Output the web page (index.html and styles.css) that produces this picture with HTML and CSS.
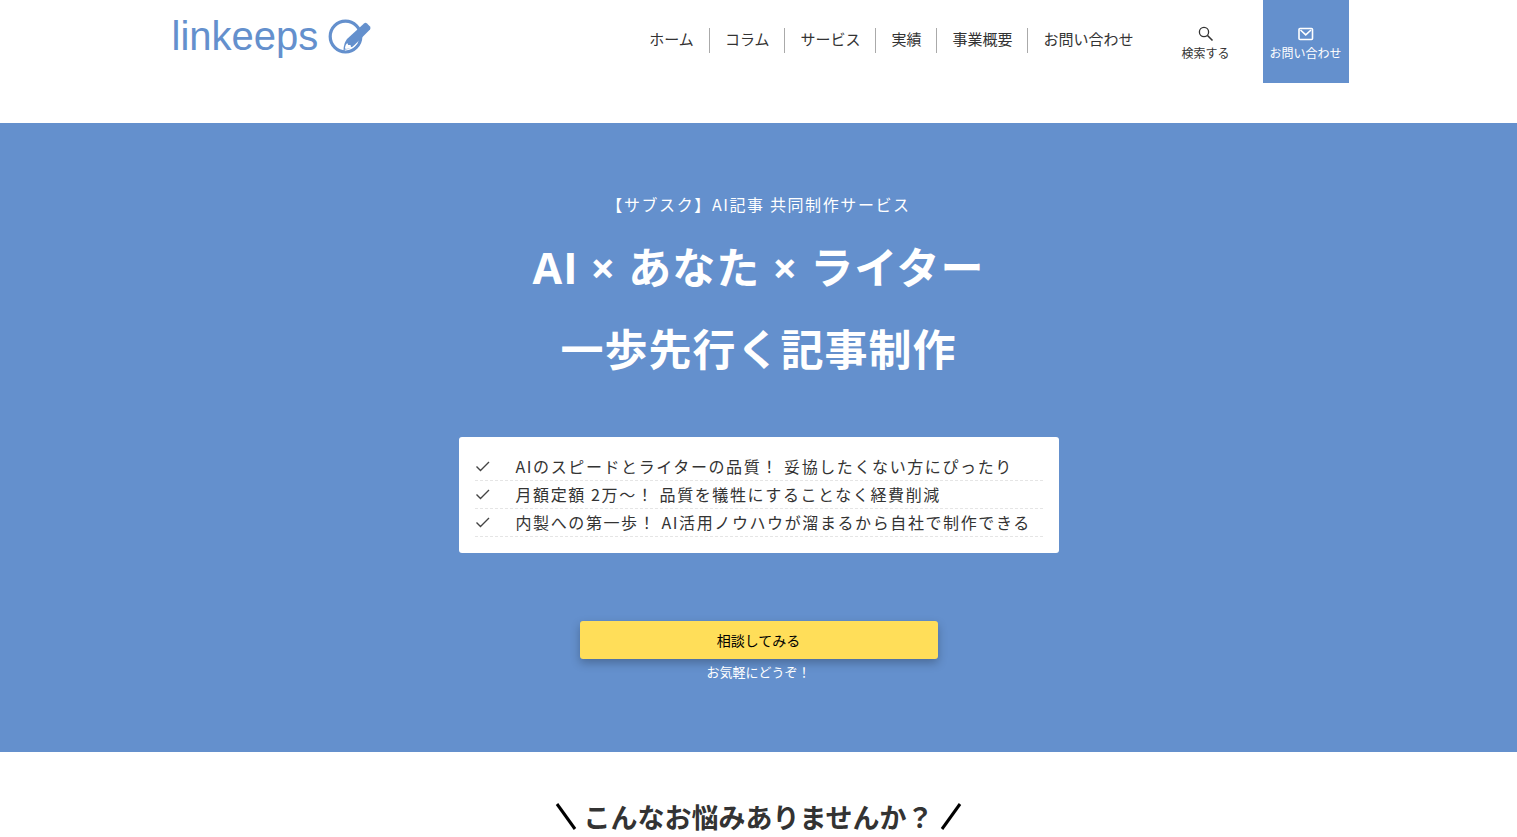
FILE: index.html
```html
<!DOCTYPE html>
<html lang="ja">
<head>
    <meta charset="UTF-8">
    <meta name="viewport" content="width=device-width, initial-scale=1.0">
    <title>linkeeps</title>
    <link rel="stylesheet" href="styles.css">
</head>
<body>
    <header class="header">
        <a class="logo" href="#">
            <span>linkeeps</span>
            <svg class="logo-mark" viewBox="0 0 44 36" aria-hidden="true">
                <circle cx="17.500" cy="18.500" r="15.300" fill="none" stroke="#6490cd" stroke-width="3.200"/>
                <path d="M36 5.500 Q37.500 4.200 39 5.500 L42 8.500 Q43 10 42 11.500 L26.500 27 Q22 31.500 15.500 32 Q15.500 26 19 21 Z" fill="#6490cd"/>
                <path d="M19.200 25 l1 2 l2.300 0 l.500 2 l2 .600 Q22 31 17.500 31 l-.500 -1.500 Q17.200 27 19.200 25 Z" fill="#fff"/>
                <path d="M17 32.300 Q25 31 29.500 25" fill="none" stroke="#fff" stroke-width=".600"/>
            </svg>
        </a>
        <nav class="nav">
            <ul>
                <li><a href="#">ホーム</a></li>
                <li><a href="#">コラム</a></li>
                <li><a href="#">サービス</a></li>
                <li><a href="#">実績</a></li>
                <li><a href="#">事業概要</a></li>
                <li><a href="#">お問い合わせ</a></li>
            </ul>
        </nav>
        <button class="tool" type="button">
            <svg viewBox="0 0 16 16" aria-hidden="true">
                <circle cx="6" cy="6" r="4.600" fill="none" stroke="currentColor" stroke-width="1.300"/>
                <path d="M9.500 9.500 L14.500 14.500" stroke="currentColor" stroke-width="1.600"/>
            </svg>
            <span>検索する</span>
        </button>
        <a class="tool tool-contact" href="#">
            <svg viewBox="0 0 16 16" aria-hidden="true">
                <rect x="1" y="2.500" width="13.500" height="11" rx="1" fill="none" stroke="currentColor" stroke-width="1.600"/>
                <path d="M2.500 4 L7.750 8.800 L13 4" fill="none" stroke="currentColor" stroke-width="1.600"/>
            </svg>
            <span>お問い合わせ</span>
        </a>
    </header>

    <main>
        <section class="hero">
            <p class="hero-sub">【サブスク】AI記事 共同制作サービス</p>
            <h1>AI × あなた × ライター<br>一歩先行く記事制作</h1>
            <ul class="points">
                <li><svg viewBox="0 0 16 16" aria-hidden="true"><path d="M1.500 7.500 L5.500 11.500 L14 3"/></svg>AIのスピードとライターの品質！ 妥協したくない方にぴったり</li>
                <li><svg viewBox="0 0 16 16" aria-hidden="true"><path d="M1.500 7.500 L5.500 11.500 L14 3"/></svg>月額定額 2万～！ 品質を犠牲にすることなく経費削減</li>
                <li><svg viewBox="0 0 16 16" aria-hidden="true"><path d="M1.500 7.500 L5.500 11.500 L14 3"/></svg>内製への第一歩！ AI活用ノウハウが溜まるから自社で制作できる</li>
            </ul>
            <a class="cta" href="#">相談してみる</a>
            <p class="cta-note">お気軽にどうぞ！</p>
        </section>

        <section class="worries">
            <svg viewBox="0 0 22 28" aria-hidden="true"><path d="M2 1 L20 26"/></svg>
            <h2>こんなお悩みありませんか？</h2>
            <svg viewBox="0 0 22 28" aria-hidden="true"><path d="M20 1 L2 26"/></svg>
        </section>
    </main>
</body>
</html>
```
FILE: styles.css
```css
* {
    box-sizing: border-box;
}
body {
    margin: 0;
    font-family: "Noto Sans CJK JP", sans-serif;
    font-size: 16px;
    color: #333;
    background: #fff;
}
h1, h2, p, ul {
    margin: 0;
    padding: 0;
}
ul {
    list-style: none;
}
a {
    color: inherit;
    text-decoration: none;
}

/* header */
.header {
    display: flex;
    align-items: flex-start;
    gap: 14px;
    max-width: 1180px;
    margin: 0 auto 40px;
}
.logo {
    display: flex;
    align-items: flex-start;
    gap: 10px;
    margin-right: auto;
    padding: 18px 0 0 3px;
    font-family: "Liberation Sans", sans-serif;
    font-size: 40px;
    line-height: 36px;
    color: #6490cd;
}
.logo-mark {
    width: 44px;
    height: 36px;
}
.nav ul {
    display: flex;
    padding-top: 28px;
}
.nav li {
    height: 25px;
    padding: 0 15px 0 16px;
    font-size: 15px;
    line-height: 21px;
}
.nav li + li {
    border-left: 1px solid #aaa;
    padding-left: 15px;
}
.tool {
    display: flex;
    flex-direction: column;
    align-items: center;
    width: 86px;
    height: 83px;
    padding: 26px 0 0;
    border: none;
    background: none;
    color: #333;
    font-family: inherit;
    font-size: 12px;
    line-height: 22px;
    white-space: nowrap;
    cursor: pointer;
}
.tool svg {
    width: 16px;
    height: 16px;
}
.tool-contact {
    background: #6490cd;
    color: #fff;
}

/* hero */
.hero {
    display: flex;
    flex-direction: column;
    align-items: center;
    padding: 66px 16px;
    background: #6490cd;
    color: #fff;
    text-align: center;
}
.hero-sub {
    line-height: 30px;
    letter-spacing: 0.1em;
}
h1 {
    margin-top: 8px;
    font-family: "Open Sans", "Noto Sans CJK JP", sans-serif;
    font-size: 43px;
    font-weight: 700;
    line-height: 82px;
    letter-spacing: 1px;
}
.points {
    width: 100%;
    max-width: 600px;
    margin-top: 46px;
    padding: 16px;
    border-radius: 3px;
    background: #fff;
    color: #333;
    text-align: left;
}
.points li {
    display: flex;
    align-items: center;
    gap: 25px;
    border-bottom: 1px dashed #e5e5e5;
    line-height: 27px;
    letter-spacing: 0.1em;
}
.points svg {
    flex: none;
    width: 16px;
    height: 16px;
    fill: none;
    stroke: #444;
    stroke-width: 1.4;
}
.cta {
    width: 100%;
    max-width: 358px;
    margin-top: 68px;
    border-radius: 3px;
    background: #ffde59;
    box-shadow: 0 4px 10px rgba(0, 0, 0, 0.25);
    color: #000;
    font-size: 14px;
    line-height: 38px;
}
.cta-note {
    margin-bottom: 2px;
    font-size: 13px;
    line-height: 25px;
}

/* worries */
.worries {
    display: flex;
    justify-content: center;
    align-items: center;
    gap: 6px;
    padding: 44px 0 0;
}
.worries h2 {
    font-size: 27px;
    line-height: 41px;
}
.worries svg {
    width: 22px;
    height: 28px;
    fill: none;
    stroke: #000;
    stroke-width: 3;
}
```
